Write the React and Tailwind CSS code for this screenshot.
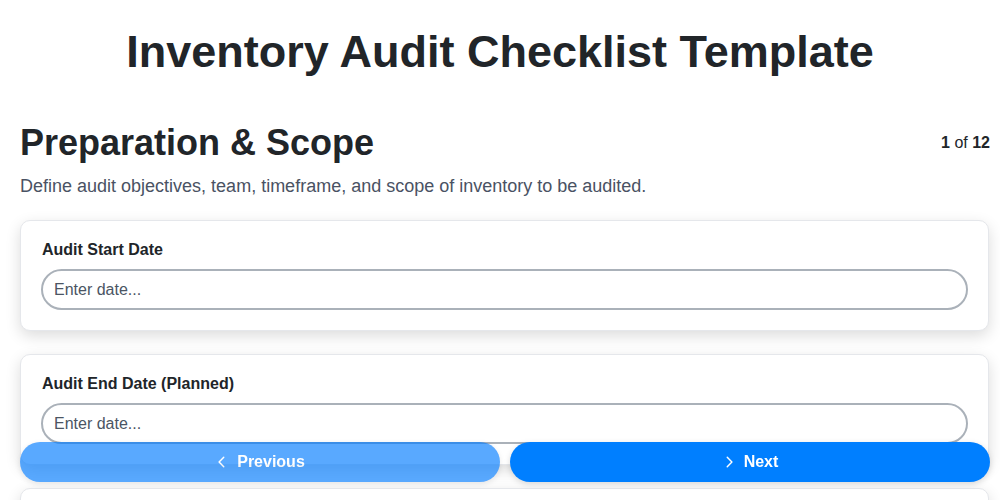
import React from "react";

function Card({ label }) {
  return (
    <div className="rounded-[10px] border border-[#e5e7eb] bg-white p-5 shadow-[0_5px_15px_rgba(0,0,0,0.14)]">
      <label className="block pl-px text-[16px] font-bold leading-[18px] text-[#212529]">{label}</label>
      <input
        type="text"
        placeholder="Enter date..."
        className="mt-[10px] block h-[41px] w-full rounded-full border-2 border-[#aab1b9] bg-white px-[11px] text-[16px] text-[#212529] outline-none placeholder:text-[#4b5563]"
      />
    </div>
  );
}

export default function App() {
  return (
    <div className="h-[500px] overflow-hidden bg-white pl-5 pr-[10px] text-[#212529]" style={{ fontFamily: '"Liberation Sans", Arial, sans-serif' }}>
      <h1 className="-ml-5 -mr-[10px] pt-[26px] text-center text-[45px] font-bold leading-[52px]">Inventory Audit Checklist Template</h1>
      <div className="mt-[43px] flex items-start justify-between">
        <h2 className="text-[36px] font-bold leading-[44px]">Preparation &amp; Scope</h2>
        <div className="mt-[10px] text-[16px]"><b>1</b> of <b>12</b></div>
      </div>
      <p className="mt-[11px] text-[18px] leading-[20px] text-[#4a5263]">Define audit objectives, team, timeframe, and scope of inventory to be audited.</p>
      <div className="mt-[24px] mr-[1px] flex flex-col gap-[23px]">
        <Card label="Audit Start Date" />
        <Card label="Audit End Date (Planned)" />
        <div className="h-[60px] rounded-[10px] border border-[#e5e7eb] bg-white shadow-[0_5px_15px_rgba(0,0,0,0.14)]" />
      </div>
      <div className="fixed bottom-[18px] left-5 right-[10px] flex gap-[10px]">
        <button className="flex h-[40px] flex-1 items-center justify-center gap-2 rounded-full bg-[#007bff] text-[16px] font-bold text-white opacity-65 shadow-[0_2px_6px_rgba(0,0,0,0.15)]">
          <svg width="14" height="14" viewBox="0 0 24 24" fill="none" stroke="currentColor" strokeWidth="2.5" strokeLinecap="round" strokeLinejoin="round"><path d="M15 4l-8 8 8 8" /></svg>
          Previous
        </button>
        <button className="flex h-[40px] flex-1 items-center justify-center gap-2 rounded-full bg-[#007fff] text-[16px] font-bold text-white shadow-[0_2px_6px_rgba(0,0,0,0.15)]">
          <svg width="14" height="14" viewBox="0 0 24 24" fill="none" stroke="currentColor" strokeWidth="2.5" strokeLinecap="round" strokeLinejoin="round"><path d="M9 4l8 8-8 8" /></svg>
          Next
        </button>
      </div>
    </div>
  );
}
